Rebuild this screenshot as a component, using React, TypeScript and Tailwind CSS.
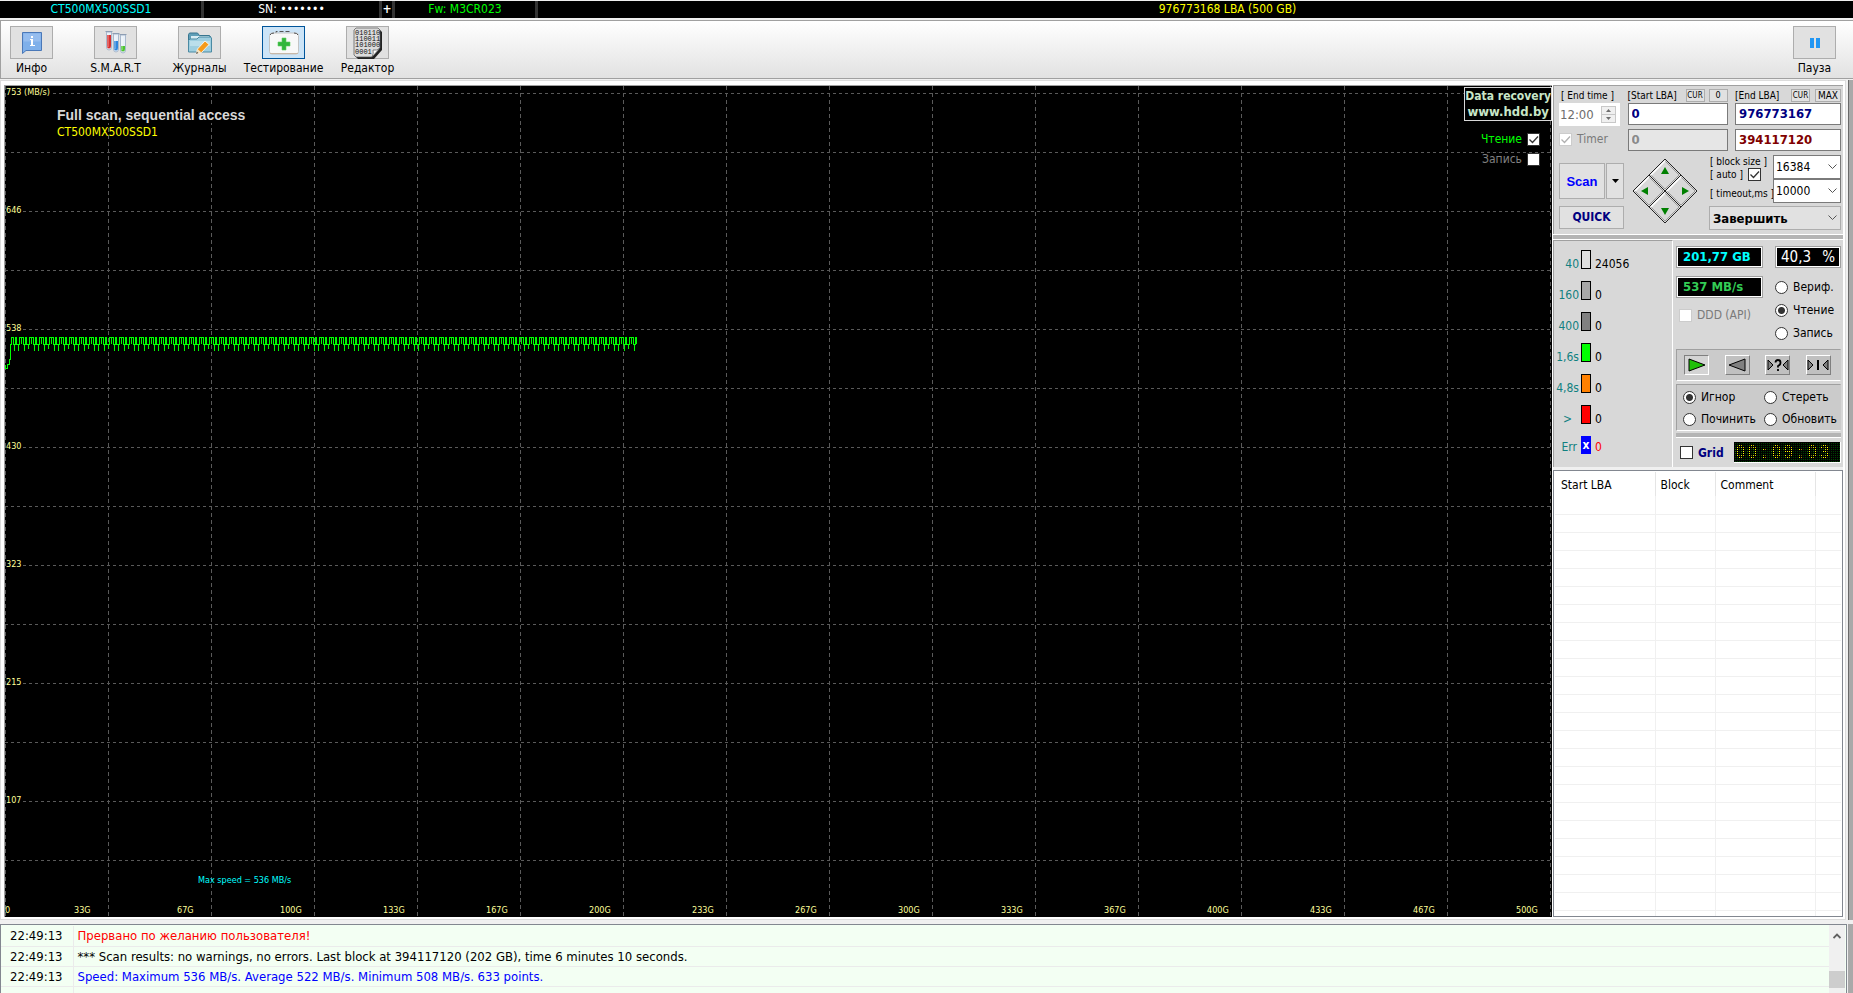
import { useState } from "react";
import type { ReactNode } from "react";
import clsx from "clsx";

const X_LABELS = ["33G", "67G", "100G", "133G", "167G", "200G", "233G", "267G", "300G", "333G", "367G", "400G", "433G", "467G", "500G"];
const Y_LABELS = ["753 (MB/s)", "646", "538", "430", "323", "215", "107"];

const CHART_W = 1547;
const CHART_H = 831;

const STATS = [
  { label: "40", color: "bg-[#e0e0e0]", value: "24056" },
  { label: "160", color: "bg-[#a8a8a8]", value: "0" },
  { label: "400", color: "bg-[#808080]", value: "0" },
  { label: "1,6s", color: "bg-[#00ff00]", value: "0" },
  { label: "4,8s", color: "bg-[#ff8000]", value: "0" },
  { label: ">", color: "bg-[#ff0000]", value: "0" },
];

const LOG = [
  { time: "22:49:13", text: "Прервано по желанию пользователя!", color: "text-[#ff0000]" },
  { time: "22:49:13", text: "*** Scan results: no warnings, no errors. Last block at 394117120 (202 GB), time 6 minutes 10 seconds.", color: "text-black" },
  { time: "22:49:13", text: "Speed: Maximum 536 MB/s. Average 522 MB/s. Minimum 508 MB/s. 633 points.", color: "text-[#0000ff]" },
  { time: "", text: "", color: "" },
];

// Read speed over the scanned part of the disk
function buildTrace() {
  let d = "M0.5 279 V282 H2.5 V278 H4.5 V273 H5.5 V258 H6.5 V251";
  let i = 0;
  for (let x = 7; x < 629; x += 5) {
    const low = i % 4 === 3 ? 263 : 265;
    const a = x + 0.5;
    if (i % 2 === 0) {
      d += ` H${a + 1} V258 H${a + 2} V${low} V258 H${a + 3} V251 H${a + 4} V258 V251`;
    } else {
      d += ` V258 H${a + 1} V${low} V258 H${a + 2} V251 H${a + 4} V258 V251`;
    }
    i++;
  }
  return d;
}

function InfoIcon() {
  return (
    <svg width="24" height="26" viewBox="0 0 24 26">
      <path d="M2.5 2.5h19v18H6l-3.5 3z" fill="#7fb0ea" stroke="#4a78b8" />
      <path d="M3.500 3.500h17v8h-17z" fill="#a3c6f2" opacity=".6" />
      <path d="M10 9h3v6h2v1h-5v-1h1v-5h-1zM11 6h2v2h-2z" fill="#fff" />
    </svg>
  );
}

function SmartIcon() {
  const tubes = [
    { x: 1, y: 1, c: "#d93030" },
    { x: 8, y: 3, c: "#2f86dd" },
    { x: 15, y: 4, c: "#4cc52f" },
  ];
  return (
    <svg width="22" height="26" viewBox="0 0 22 26">
      {tubes.map((t, i) => (
        <g key={t.x}>
          <path d={`M${t.x + 0.5} ${t.y + 1}h5v15a2.500 3 0 0 1-5 0z`} fill="#e9f0f8" stroke="#a8b8cc" />
          <path d={`M${t.x + 1} ${t.y + 4 + i * 4}h4v${11 - i * 4}a2 2.500 0 0 1-4 0z`} fill={t.c} />
          <path d={`M${t.x + 2} ${t.y + 3}v13`} stroke="#fff" opacity=".5" />
          <path d={`M${t.x - 0.5} ${t.y + 0.5}h7`} stroke="#8d9db3" />
        </g>
      ))}
    </svg>
  );
}

function FolderIcon() {
  return (
    <svg width="26" height="24" viewBox="0 0 26 24">
      <path d="M1.500 20.500v-17l1-1.500h8l2 2.500h10l1 1v15z" fill="#5f9fb8" stroke="#38758f" />
      <path d="M4 5h18v12H4z" fill="#d9edf4" />
      <path d="M1.500 21V9.500L3 8h7l2-2h11.500l1 1v14z" fill="#9fcfe0" stroke="#4b8aa3" />
      <path d="M3 10h20v5H3z" fill="#c8e6ef" opacity=".7" />
      <path d="M9 23l1.500-5 7.500-8 4 3.500-7.500 8z" fill="#f59a1b" stroke="#fff" strokeWidth=".8" />
      <path d="M9 23l1.500-5 4 3.500z" fill="#f7e3c0" />
      <path d="M9 23l.8-2.400 1.600 1.500z" fill="#555" />
    </svg>
  );
}

function TestIcon() {
  return (
    <svg width="32" height="26" viewBox="0 0 32 26">
      <path d="M8 4V1.500h14V4" fill="none" stroke="#555" strokeDasharray="4 2" />
      <rect x="1.500" y="3" width="29" height="21" rx="2.500" fill="#f8f8f8" stroke="#c4c4c4" />
      <path d="M2 5q1-2 4-2M30 5q-1-2-4-2" stroke="#555" fill="none" />
      <path d="M2 23.500h28" stroke="#c8b8a8" />
      <path d="M14 8h4v4h4v4h-4v4h-4v-4h-4v-4h4z" fill="#33b63c" stroke="#5fce60" strokeWidth=".6" />
    </svg>
  );
}

function EditorIcon() {
  return (
    <svg width="30" height="32" viewBox="0 0 30 32">
      <path d="M4 2h22l3 3v18l-8 9H5l-3-3V4z" fill="#222" />
      <path d="M3 1h22l2 2v18l-8 9H3l-2-2V3z" fill="#dcdcdc" stroke="#555" strokeWidth=".7" />
      <g fontFamily="Liberation Mono, monospace" fontSize="7" fill="#111">
        <text x="2" y="8">010110</text>
        <text x="2" y="14">110011</text>
        <text x="2" y="20">101000</text>
        <text x="2" y="27">0001</text>
      </g>
      <path d="M19 30q2-4 1-7 4 1 7-2z" fill="#fff" stroke="#444" strokeWidth=".6" />
    </svg>
  );
}

function PauseIcon() {
  return (
    <svg width="12" height="12" viewBox="0 0 12 12">
      <path d="M1 1h4v10H1zM7 1h4v10H7z" fill="#2196f3" />
    </svg>
  );
}

function ToolButton({ label, active, children }: { label: string; active?: boolean; children: ReactNode }) {
  return (
    <button className="flex w-[43px] flex-col items-center">
      <span
        className={clsx(
          "flex h-[33px] w-[43px] items-center justify-center border",
          active ? "border-[#00559b] bg-[#cce4f7]" : "border-[#adadad] bg-[#e1e1e1]"
        )}
      >
        {children}
      </span>
      <span className="mt-px whitespace-nowrap text-[12px] leading-4">{label}</span>
    </button>
  );
}

function TickBox({ label, checked = false, disabled = false, textClass, before = false }: {
  label: string;
  checked?: boolean;
  disabled?: boolean;
  textClass: string;
  before?: boolean;
}) {
  const [on, setOn] = useState(checked);
  return (
    <label className={clsx("flex items-center gap-[5px] whitespace-nowrap", before && "flex-row-reverse")}>
      <span className="relative block size-[13px]">
        <input
          type="checkbox"
          checked={on}
          disabled={disabled}
          onChange={() => setOn(!on)}
          className="block size-[13px] appearance-none border border-[#333333] bg-white disabled:border-[#cccccc]"
        />
        {on && (
          <svg className="pointer-events-none absolute inset-0" width="13" height="13" viewBox="0 0 13 13">
            <path d="M2.500 6.500l3 3 5.500-6" fill="none" stroke={disabled ? "#b0b0b0" : "#333"} strokeWidth="1.300" />
          </svg>
        )}
      </span>
      <span className={textClass}>{label}</span>
    </label>
  );
}

function Radio({ name, label, checked = false }: { name: string; label: string; checked?: boolean }) {
  return (
    <label className="flex items-center gap-[5px] whitespace-nowrap text-[12px] leading-4">
      <input
        type="radio"
        name={name}
        defaultChecked={checked}
        className="size-[13px] shrink-0 appearance-none rounded-full border border-[#333333] bg-white checked:bg-[radial-gradient(circle,#333333_3px,#ffffff_4px)]"
      />
      {label}
    </label>
  );
}

function Select({ label, options, className }: { label: string; options: string[]; className: string }) {
  return (
    <span className="relative block">
      <select aria-label={label} className={clsx("block w-full appearance-none", className)}>
        {options.map((o) => (
          <option key={o}>{o}</option>
        ))}
      </select>
      <svg className="pointer-events-none absolute right-1 top-1/2 -translate-y-1/2" width="9" height="6" viewBox="0 0 9 6">
        <path d="M.5.500l4 4 4-4" fill="none" stroke="#555" />
      </svg>
    </span>
  );
}

function MiniButton({ children, className }: { children: ReactNode; className: string }) {
  return (
    <button className={clsx("h-[13px] border border-[#adadad] bg-[#e1e1e1] text-center leading-[11px]", className)}>
      {children}
    </button>
  );
}

function Chart() {
  const verticals = Array.from({ length: 16 }, (_, i) => i * 103 + 0.5);
  const horizontals = Array.from({ length: 14 }, (_, i) => i * 59 + 7.5);
  return (
    <div className="relative min-w-0 flex-1 overflow-hidden bg-black">
      <svg className="absolute inset-0 h-full w-full" viewBox={`0 0 ${CHART_W} ${CHART_H}`} preserveAspectRatio="none" shapeRendering="crispEdges">
        <g stroke="#5a5a5a" strokeDasharray="3 3">
          {horizontals.map((y) => (
            <path key={y} d={`M0 ${y}H${CHART_W}`} />
          ))}
          {verticals.map((x) => (
            <path key={x} d={`M${x} 0V${CHART_H}`} strokeDasharray="4 3" />
          ))}
        </g>
        <path d={buildTrace()} fill="none" stroke="#00ff00" />
      </svg>
      {Y_LABELS.map((label, i) => (
        <span
          key={label}
          className="absolute left-px bg-black pr-px text-[9px] leading-[12px] text-[#ffff99]"
          style={{ top: `${((i * 118) / CHART_H) * 100}%` }}
        >
          {label}
        </span>
      ))}
      <span className="absolute bottom-px left-0 text-[9px] leading-[11px] text-[#ffff99]">0</span>
      {X_LABELS.map((label, i) => (
        <span
          key={label}
          className="absolute bottom-px text-[9px] leading-[11px] text-[#ffff99]"
          style={{ left: `${((i * 103 + 69) / CHART_W) * 100}%` }}
        >
          {label}
        </span>
      ))}
      <div className="absolute left-[52px] top-[21px]">
        <h1 className="bg-black font-['Liberation_Sans',sans-serif] text-[14px] font-bold leading-4 text-[#d8d8d8]">Full scan, sequential access</h1>
        <p className="mt-px text-[12px] leading-4 text-[#ffff00]">CT500MX500SSD1</p>
      </div>
      <span className="absolute bottom-[31px] left-[193px] text-[9px] leading-[11px] text-[#00ffff]">Max speed = 536 MB/s</span>
      <div className="absolute right-0 top-0 flex flex-col items-end">
        <a href="http://www.hdd.by" className="mt-px border border-[#d8d8d8] bg-black pt-px text-center text-[12px] font-bold leading-[15px] text-[#c8e6c8]">
          Data recovery
          <br />
          <span className="text-[13px]">www.hdd.by</span>
        </a>
        <div className="mr-3 mt-[10px] flex flex-col items-end gap-1">
          <TickBox before checked label="Чтение" textClass="text-[12px] leading-4 text-[#00ff00]" />
          <TickBox before label="Запись" textClass="text-[12px] leading-4 text-[#808080]" />
        </div>
      </div>
    </div>
  );
}

function Diamond() {
  const cells = [
    { cx: 33, cy: 17, arrow: "M33 9l4 7h-8z", name: "Up" },
    { cx: 17, cy: 33, arrow: "M9 33l7-4v8z", name: "Left" },
    { cx: 49, cy: 33, arrow: "M57 33l-7-4v8z", name: "Right" },
    { cx: 33, cy: 49, arrow: "M33 57l-4-7h8z", name: "Down" },
  ];
  return (
    <button aria-label="Navigate" className="size-[67px]">
      <svg width="67" height="67" viewBox="0 0 67 67">
        {cells.map(({ cx, cy, arrow, name }) => (
          <g key={name}>
            <path d={`M${cx} ${cy - 16}l16 16-16 16-16-16z`} fill="#d8d8d8" stroke="#222" />
            <path d={`M${cx - 14} ${cy}l14 14 14-14-14-14`} stroke="#999" fill="none" />
            <path d={`M${cx - 14} ${cy}l14-14`} stroke="#fff" strokeWidth="1.500" />
            <path d={arrow} fill="#008000" />
          </g>
        ))}
      </svg>
    </button>
  );
}

function RangePanel() {
  const field = "block h-[22px] w-full border border-[#7a7a7a] px-[3px] pb-px text-[13px] font-bold";
  return (
    <section className="border-l border-t border-[#a0a0a0] bg-[#d8d8d8] pb-1 pl-[5px] pr-[2px] pt-[3px] text-[10px] leading-[13px]">
      <div className="flex justify-between">
        <div className="w-[61px]">
          <label htmlFor="end-time" className="block h-[14px] whitespace-nowrap pl-[2px]">[ End time ]</label>
          <div className="flex h-[23px] items-center bg-white pr-[2px]">
            <input id="end-time" disabled defaultValue="12:00" className="w-[42px] pl-px text-[13px] text-[#6d6d6d]" />
            <span className="flex h-[17px] w-[15px] flex-col border border-[#c8c8c8] bg-[#f0f0f0] text-[#6d6d6d]">
              <button aria-label="Later" className="flex flex-1 items-center justify-center border-b border-[#c8c8c8]">
                <svg width="5" height="3"><path d="M0 3l2.500-3L5 3z" fill="currentColor" /></svg>
              </button>
              <button aria-label="Earlier" className="flex flex-1 items-center justify-center">
                <svg width="5" height="3"><path d="M0 0l2.500 3L5 0z" fill="currentColor" /></svg>
              </button>
            </span>
          </div>
          <div className="mt-[7px]">
            <TickBox disabled checked label="Timer" textClass="text-[12px] leading-[13px] text-[#7a7a7a]" />
          </div>
        </div>
        <div className="w-[100px]">
          <div className="flex h-[14px] items-start">
            <label htmlFor="start-lba" className="flex-1 whitespace-nowrap">[Start LBA]</label>
            <MiniButton className="w-[19px] text-[8px]">CUR</MiniButton>
            <MiniButton className="ml-1 w-[19px] text-[9px]">0</MiniButton>
          </div>
          <input id="start-lba" defaultValue="0" className={clsx(field, "bg-white text-[#000080]")} />
          <input aria-label="Current start" disabled defaultValue="0" className={clsx(field, "mt-1 bg-[#e6e6e6] text-[#8a8a8a]")} />
        </div>
        <div className="w-[106px]">
          <div className="flex h-[14px] items-start">
            <label htmlFor="end-lba" className="flex-1 whitespace-nowrap">[End LBA]</label>
            <MiniButton className="w-[19px] text-[8px]">CUR</MiniButton>
            <MiniButton className="ml-[5px] w-[26px] text-[10px]">MAX</MiniButton>
          </div>
          <input id="end-lba" defaultValue="976773167" className={clsx(field, "bg-white text-[#000080]")} />
          <input aria-label="Current block" defaultValue="394117120" className={clsx(field, "mt-1 bg-white text-[#800000]")} />
        </div>
      </div>
      <div className="mt-1 flex justify-between">
        <div className="w-[65px] pt-2">
          <div className="flex gap-px">
            <button className="h-9 flex-1 border border-[#adadad] bg-[#e1e1e1] font-['Liberation_Sans',sans-serif] text-[13px] font-bold text-[#0000ff]">Scan</button>
            <button aria-label="Scan options" className="flex h-9 w-[18px] items-center justify-center border border-[#adadad] bg-[#e1e1e1]">
              <svg width="7" height="4"><path d="M0 0h7L3.500 4z" /></svg>
            </button>
          </div>
          <button className="mt-[7px] block h-[23px] w-full border border-[#adadad] bg-[#e1e1e1] text-[12px] font-bold text-[#000080]">QUICK</button>
        </div>
        <div className="pr-[3px] pt-[3px]">
          <Diamond />
        </div>
        <div className="w-[132px]">
          <div className="flex">
            <div className="w-16 whitespace-nowrap">
              <div className="pl-px">[ block size ]</div>
              <div className="flex items-center pl-px">
                <TickBox before checked label="[ auto ]" textClass="" />
              </div>
              <div className="mt-[6px] pl-px">[ timeout,ms ]</div>
            </div>
            <div className="flex min-w-0 flex-1 flex-col">
              <Select label="Block size" options={["16384"]} className="h-6 border border-[#7a7a7a] bg-white pl-[2px] text-[12px]" />
              <Select label="Timeout, ms" options={["10000"]} className="h-6 border border-[#7a7a7a] bg-white pl-[2px] text-[12px]" />
            </div>
          </div>
          <div className="mt-[3px]">
            <Select label="On finish" options={["Завершить"]} className="h-6 border border-[#adadad] bg-[#e1e1e1] pl-[3px] text-[13px] font-bold" />
          </div>
        </div>
      </div>
    </section>
  );
}

function Readout({ className, children }: { className: string; children: ReactNode }) {
  return (
    <div className="border border-[#a0a0a0] bg-white p-px">
      <div className={clsx("flex h-[18px] items-center bg-black", className)}>{children}</div>
    </div>
  );
}

function StatsPanel() {
  return (
    <section className="w-[120px] border-l border-t border-[#a0a0a0] border-r border-r-white bg-[#d8d8d8] pt-[9px] text-[12px]">
      {STATS.map((s) => (
        <div key={s.label} className="flex h-[31px]">
          <span className={clsx("w-[27px] shrink-0 whitespace-nowrap pt-[6px] leading-4 text-[#108080]", s.label === ">" ? "text-center" : "pr-[2px] text-right")}>{s.label}</span>
          <span className={clsx("h-[19px] w-[10px] shrink-0 border border-black", s.color)} />
          <span className="pl-1 pt-[6px] leading-4">{s.value}</span>
        </div>
      ))}
      <div className="flex h-[27px]">
        <span className="w-[27px] shrink-0 pr-1 pt-[3px] text-right leading-4 text-[#108080]">Err</span>
        <span className="flex h-[18px] w-[10px] shrink-0 items-center justify-center bg-[#0000ff] font-bold text-white">x</span>
        <span className="pl-1 pt-[3px] leading-4 text-[#ff0000]">0</span>
      </div>
    </section>
  );
}

function PlaybackButtons() {
  const base = "flex h-5 w-[25px] items-center justify-center border";
  const raised = "border-b-[#808080] border-l-white border-r-[#808080] border-t-white bg-[#c0c0c0]";
  return (
    <div className="flex h-8 items-center justify-between border border-[#a0a0a0] border-b-white border-r-transparent bg-[#cbcbcb] pl-[7px] pr-[9px]">
      <button aria-label="Forward" className={clsx(base, "border-b-white border-l-[#808080] border-r-white border-t-[#808080] bg-[#d4d4d4]")}>
        <svg width="18" height="14"><path d="M1 1l16 6-16 6z" fill="#1fc00a" stroke="#000" /></svg>
      </button>
      <button aria-label="Backward" className={clsx(base, raised)}>
        <svg width="18" height="14"><path d="M17 1L1 7l16 6z" fill="#808080" stroke="#000" /></svg>
      </button>
      <button aria-label="Random" className={clsx(base, raised)}>
        <svg width="22" height="14" viewBox="0 0 22 14">
          <path d="M1 2l5 5-5 5zM21 2l-5 5 5 5z" fill="#808080" stroke="#000" />
          <path d="M8.500 4.500q0-2.500 2.500-2.500t2.500 2.500-2.500 3.500v1.500M11 11v2" fill="none" stroke="#000" strokeWidth="1.800" />
        </svg>
      </button>
      <button aria-label="Butterfly" className={clsx(base, raised)}>
        <svg width="22" height="14" viewBox="0 0 22 14">
          <path d="M1 2l5 5-5 5zM21 2l-5 5 5 5z" fill="#808080" stroke="#000" />
          <path d="M11 2v10" stroke="#000" strokeWidth="2" />
        </svg>
      </button>
    </div>
  );
}

function DotMatrixClock({ value }: { value: string }) {
  return (
    <div className="relative flex h-[21px] w-[107px] border-b border-r border-white bg-[#004000] font-['Liberation_Sans',sans-serif] text-[18px] font-bold leading-[21px] text-[#ffff00]">
      {value.split("").map((ch, i) => (
        <span key={i} className="w-3 text-center">{ch}</span>
      ))}
      <span className="absolute inset-0 bg-[linear-gradient(to_right,#000000_1px,transparent_1px),linear-gradient(to_bottom,#000000_1px,transparent_1px)] bg-[size:2px_2px]" />
    </div>
  );
}

function ModePanel() {
  return (
    <section className="min-w-0 flex-1 bg-[#d8d8d8] pb-1 pl-[3px] pr-[2px] pt-[6px] text-[12px]">
      <div className="flex justify-between">
        <div className="w-[87px]">
          <Readout className="pl-[5px] text-[13px] font-bold text-[#00ffff]">201,77 GB</Readout>
          <div className="mt-2">
            <Readout className="pl-[5px] text-[13px] font-bold text-[#33cc55]">537 MB/s</Readout>
          </div>
          <div className="mt-[9px] pl-[3px]">
            <TickBox disabled label="DDD (API)" textClass="text-[12px] leading-4 text-[#7a7a7a]" />
          </div>
        </div>
        <div className="w-[66px]">
          <Readout className="justify-between px-1 text-[15px] text-white">
            <span>40,3</span>
            <span>%</span>
          </Readout>
          <div className="mt-[11px] flex flex-col gap-[7px]">
            <Radio name="op" label="Вериф." />
            <Radio name="op" label="Чтение" checked />
            <Radio name="op" label="Запись" />
          </div>
        </div>
      </div>
      <div className="mt-2">
        <PlaybackButtons />
      </div>
      <div className="mt-[3px] grid grid-cols-[81px_1fr] gap-y-[6px] border border-[#a0a0a0] border-b-white border-r-transparent bg-[#cbcbcb] pb-[3px] pl-[6px] pt-1">
        <Radio name="action" label="Игнор" checked />
        <Radio name="action" label="Стереть" />
        <Radio name="action" label="Починить" />
        <Radio name="action" label="Обновить" />
      </div>
      <div className="mt-[2px] h-[5px] border-b border-white bg-[#b4b4b4]" />
      <div className="mt-1 flex items-center justify-between pl-1">
        <TickBox label="Grid" textClass="text-[12px] font-bold text-[#000080]" />
        <DotMatrixClock value="00:09:03" />
      </div>
    </section>
  );
}

function BlockTable() {
  return (
    <div className="min-h-0 flex-1 overflow-hidden border border-[#828790] bg-white p-px">
      <table className="w-full table-fixed border-collapse text-left text-[12px]">
        <colgroup>
          <col className="w-[100px]" />
          <col className="w-[60px]" />
          <col className="w-[100px]" />
          <col />
        </colgroup>
        <thead>
          <tr className="h-[24px]">
            <th className="border-r border-[#e5e5e5] pl-[6px] pt-px font-normal">Start LBA</th>
            <th className="border-r border-[#e5e5e5] pl-[5px] pt-px font-normal">Block</th>
            <th className="border-r border-[#e5e5e5] pl-[5px] pt-px font-normal">Comment</th>
            <th />
          </tr>
        </thead>
        <tbody>
          {Array.from({ length: 60 }, (_, i) => (
            <tr key={i} className="h-[18px] border-b border-[#f0f0f0]">
              <td className="border-r border-[#f0f0f0]" />
              <td className="border-r border-[#f0f0f0]" />
              <td className="border-r border-[#f0f0f0]" />
              <td />
            </tr>
          ))}
        </tbody>
      </table>
    </div>
  );
}

export default function App() {
  return (
    <div className="flex h-screen flex-col overflow-hidden bg-[#f0f0f0] font-['DejaVu_Sans_Condensed','DejaVu_Sans',sans-serif] text-black">
      <header className="mt-px flex h-[17px] shrink-0 divide-x-3 divide-[#333333] bg-black pl-px text-center text-[12px] leading-[17px]">
        <div className="w-[203px] text-[#00ffff]">CT500MX500SSD1</div>
        <div className="w-[178px] text-white">SN: •••••••</div>
        <button className="w-[13px] font-bold text-white">+</button>
        <div className="w-[143px] text-[#00ff00]">Fw: M3CR023</div>
        <div className="flex-1 pl-16 text-[#ffff00]">976773168 LBA (500 GB)</div>
      </header>

      <nav className="mt-[2px] flex h-[59px] shrink-0 items-start gap-[41px] border border-r-0 border-[#a0a0a0] bg-linear-to-b from-white to-[#e2e2e2] pl-[9px] pr-[17px] pt-[5px]">
        <ToolButton label="Инфо"><InfoIcon /></ToolButton>
        <ToolButton label="S.M.A.R.T"><SmartIcon /></ToolButton>
        <ToolButton label="Журналы"><FolderIcon /></ToolButton>
        <ToolButton label="Тестирование" active><TestIcon /></ToolButton>
        <ToolButton label="Редактор"><EditorIcon /></ToolButton>
        <div className="ml-auto">
          <ToolButton label="Пауза"><PauseIcon /></ToolButton>
        </div>
      </nav>

      <div className="mt-px flex min-h-0 flex-1">
        <main className="mr-[2px] flex min-w-0 flex-1 border border-[#dcdcdc] bg-white pb-[2px] pl-[3px] pr-[2px] pt-1">
          <div className="flex min-w-0 flex-1 border-l border-t border-[#a0a0a0]">
            <Chart />
          </div>
          <aside className="ml-px flex w-[290px] shrink-0 flex-col">
            <RangePanel />
            <div className="h-[6px] shrink-0 border-y border-white bg-[#b4b4b4]" />
            <div className="flex">
              <StatsPanel />
              <ModePanel />
            </div>
            <div className="h-[3px] shrink-0 bg-[#f0f0f0]" />
            <BlockTable />
          </aside>
        </main>
        <div className="w-[5px] shrink-0 border-l border-[#696969] bg-[#a9a9a9]" />
      </div>

      <div className="mt-1 flex h-[69px] shrink-0">
        <div className="mr-px flex min-w-0 flex-1 border border-b-0 border-[#828790] bg-[#f3fff3]">
          <div className="min-w-0 flex-1 overflow-hidden pt-px">
            <table className="w-full border-collapse text-[13px] leading-[19px]">
              <tbody>
                {LOG.map((row, i) => (
                  <tr key={i} className="h-5 border-b border-[#ebebeb]">
                    <td className="w-[72px] border-r border-[#ebebeb] pl-[9px]">{row.time}</td>
                    <td className={clsx("pl-1", row.color)}>{row.text}</td>
                  </tr>
                ))}
              </tbody>
            </table>
          </div>
          <div className="mr-px flex w-4 shrink-0 flex-col items-center bg-[#f0f0f0] pt-2">
            <svg width="8" height="6" viewBox="0 0 8 6"><path d="M.5 5L4 1.500 7.500 5" fill="none" stroke="#606060" strokeWidth="1.800" /></svg>
            <div className="mt-8 h-[17px] w-full bg-[#cdcdcd]" />
          </div>
        </div>
        <div className="w-[5px] bg-[#a9a9a9]" />
      </div>
    </div>
  );
}
